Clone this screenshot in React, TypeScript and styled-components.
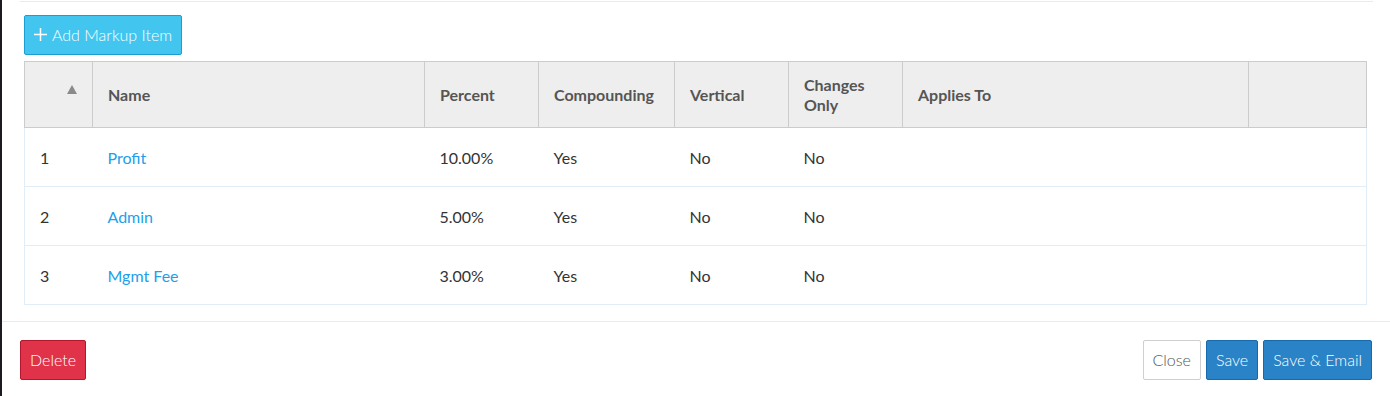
import styled, { createGlobalStyle } from "styled-components";

const GlobalStyle = createGlobalStyle`
  html, body {
    margin: 0;
    padding: 0;
    background: #1c1a1f;
  }
  body {
    font-family: Lato, "Open Sans", "Liberation Sans", sans-serif;
    font-size: 16px;
    color: #333;
  }
`;

const Modal = styled.div`
  margin-left: 2px;
  height: 396px;
  background: #fff;
  display: flex;
  flex-direction: column;
`;

const Body = styled.div`
  padding: 0 17px 0 18px;
`;

const Divider = styled.div`
  height: 1px;
  margin-top: 1px;
  background: #e3edf1;
`;

const Content = styled.div`
  padding: 13px 6px 16px 4px;
  display: flex;
  flex-direction: column;
  align-items: flex-start;
  gap: 6px;
`;

const Button = styled.button<{ $variant: "info" | "danger" | "primary" | "default" }>`
  height: 40px;
  padding: 0 9px 1px;
  display: inline-flex;
  align-items: center;
  gap: 5px;
  font-family: Lato, "Open Sans", "Liberation Sans", sans-serif;
  font-size: 16px;
  font-weight: 300;
  border-radius: 2px;
  cursor: pointer;
  border: 1px solid
    ${(p) =>
      p.$variant === "info"
        ? "#1c9dd4"
        : p.$variant === "danger"
        ? "#b1182e"
        : p.$variant === "primary"
        ? "#1869ab"
        : "#cfcfcf"};
  background: ${(p) =>
    p.$variant === "info"
      ? "#42c6ef"
      : p.$variant === "danger"
      ? "#e03248"
      : p.$variant === "primary"
      ? "#2a83c6"
      : "#fff"};
  color: ${(p) => (p.$variant === "default" ? "#555" : "#fff")};
`;

const Table = styled.table`
  width: 100%;
  border-collapse: collapse;
  table-layout: fixed;
`;

const Th = styled.th<{ $w?: number }>`
  position: relative;
  width: ${(p) => (p.$w ? `${p.$w}px` : "auto")};
  height: 66px;
  padding: 0 15px;
  box-sizing: border-box;
  background: #eeeeee;
  border: 1px solid #cccccc;
  text-align: left;
  font-weight: 700;
  color: #555;
  line-height: 20px;
  vertical-align: middle;
`;

const SortIcon = styled.svg`
  position: absolute;
  right: 15px;
  top: 23px;
`;

const Tr = styled.tr`
  border: 1px solid #e2eef7;
`;

const Td = styled.td`
  padding: 20px 15px 19px;
  line-height: 19px;
  color: #333;
`;

const NameLink = styled.a`
  color: #229fea;
  text-decoration: none;
  cursor: pointer;
`;

const Footer = styled.div`
  border-top: 1px solid #e3edf1;
  padding: 18px 18px 0 18px;
  display: flex;
  align-items: center;
`;

const Spacer = styled.div`
  flex: 1;
`;

const FooterGroup = styled.div`
  display: flex;
  gap: 5px;
`;

const markups = [
  { id: 1, name: "Profit", percent: "10.00%", compounding: "Yes", vertical: "No", changes: "No" },
  { id: 2, name: "Admin", percent: "5.00%", compounding: "Yes", vertical: "No", changes: "No" },
  { id: 3, name: "Mgmt Fee", percent: "3.00%", compounding: "Yes", vertical: "No", changes: "No" },
];

function App() {
  return (
    <>
      <GlobalStyle />
      <Modal>
        <Body>
          <Divider />
          <Content>
            <Button $variant="info">
              <svg width="13" height="13" viewBox="0 0 13 13">
                <path d="M6.5 0v13M0 6.5h13" stroke="#fff" strokeWidth="1.5" />
              </svg>
              Add Markup Item
            </Button>
            <Table>
              <thead>
                <tr>
                  <Th $w={68}>
                    <SortIcon width="10" height="9" viewBox="0 0 10 9">
                      <polygon points="5,0 10,9 0,9" fill="#8a8a8a" />
                    </SortIcon>
                  </Th>
                  <Th $w={332}>Name</Th>
                  <Th $w={114}>Percent</Th>
                  <Th $w={136}>Compounding</Th>
                  <Th $w={114}>Vertical</Th>
                  <Th $w={114}>
                    Changes
                    <br />
                    Only
                  </Th>
                  <Th $w={346}>Applies To</Th>
                  <Th />
                </tr>
              </thead>
              <tbody>
                {markups.map((m) => (
                  <Tr key={m.id}>
                    <Td>{m.id}</Td>
                    <Td>
                      <NameLink>{m.name}</NameLink>
                    </Td>
                    <Td>{m.percent}</Td>
                    <Td>{m.compounding}</Td>
                    <Td>{m.vertical}</Td>
                    <Td>{m.changes}</Td>
                    <Td />
                    <Td />
                  </Tr>
                ))}
              </tbody>
            </Table>
          </Content>
        </Body>
        <Footer>
          <Button $variant="danger">Delete</Button>
          <Spacer />
          <FooterGroup>
            <Button $variant="default">Close</Button>
            <Button $variant="primary">Save</Button>
            <Button $variant="primary">Save &amp; Email</Button>
          </FooterGroup>
        </Footer>
      </Modal>
    </>
  );
}

export default App;
